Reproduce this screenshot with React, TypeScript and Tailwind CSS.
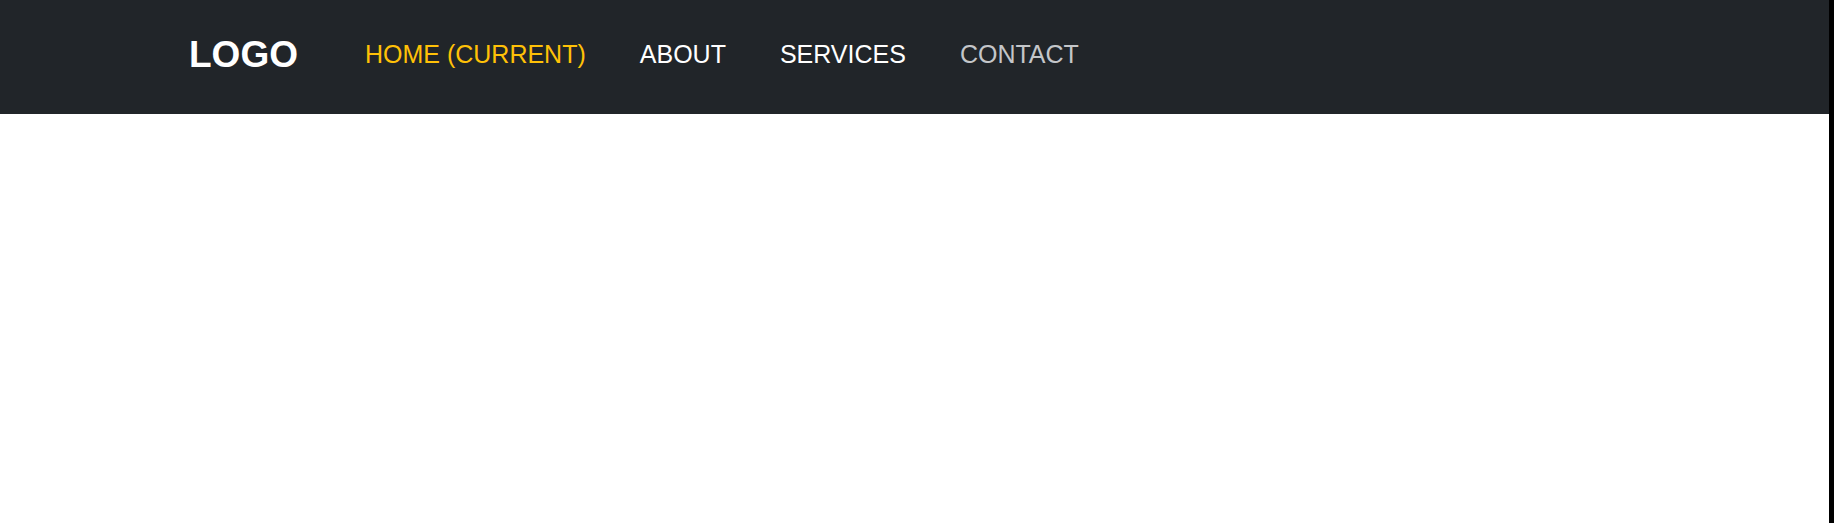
import React from 'react';

const links = [
  { label: 'HOME (CURRENT)', className: 'text-[#ffc107]' },
  { label: 'ABOUT', className: 'text-white' },
  { label: 'SERVICES', className: 'text-white' },
  { label: 'CONTACT', className: 'text-[#c4c6c9]' },
];

export default function App() {
  return (
    <div className="flex min-h-[523px] bg-white font-['Liberation_Sans',Arial,sans-serif]">
      <div className="flex-1">
        <nav className="flex h-[114px] items-center bg-[#212529] pb-[5px] pl-[189px]">
          <a href="#" className="text-[37px] font-bold text-white leading-normal">
            LOGO
          </a>
          <ul className="ml-[67px] flex items-center gap-[54px]">
            {links.map((link) => (
              <li key={link.label}>
                <a href="#" className={`text-[25px] leading-normal ${link.className}`}>
                  {link.label}
                </a>
              </li>
            ))}
          </ul>
        </nav>
      </div>
      <div className="w-[5px] bg-black" />
    </div>
  );
}
